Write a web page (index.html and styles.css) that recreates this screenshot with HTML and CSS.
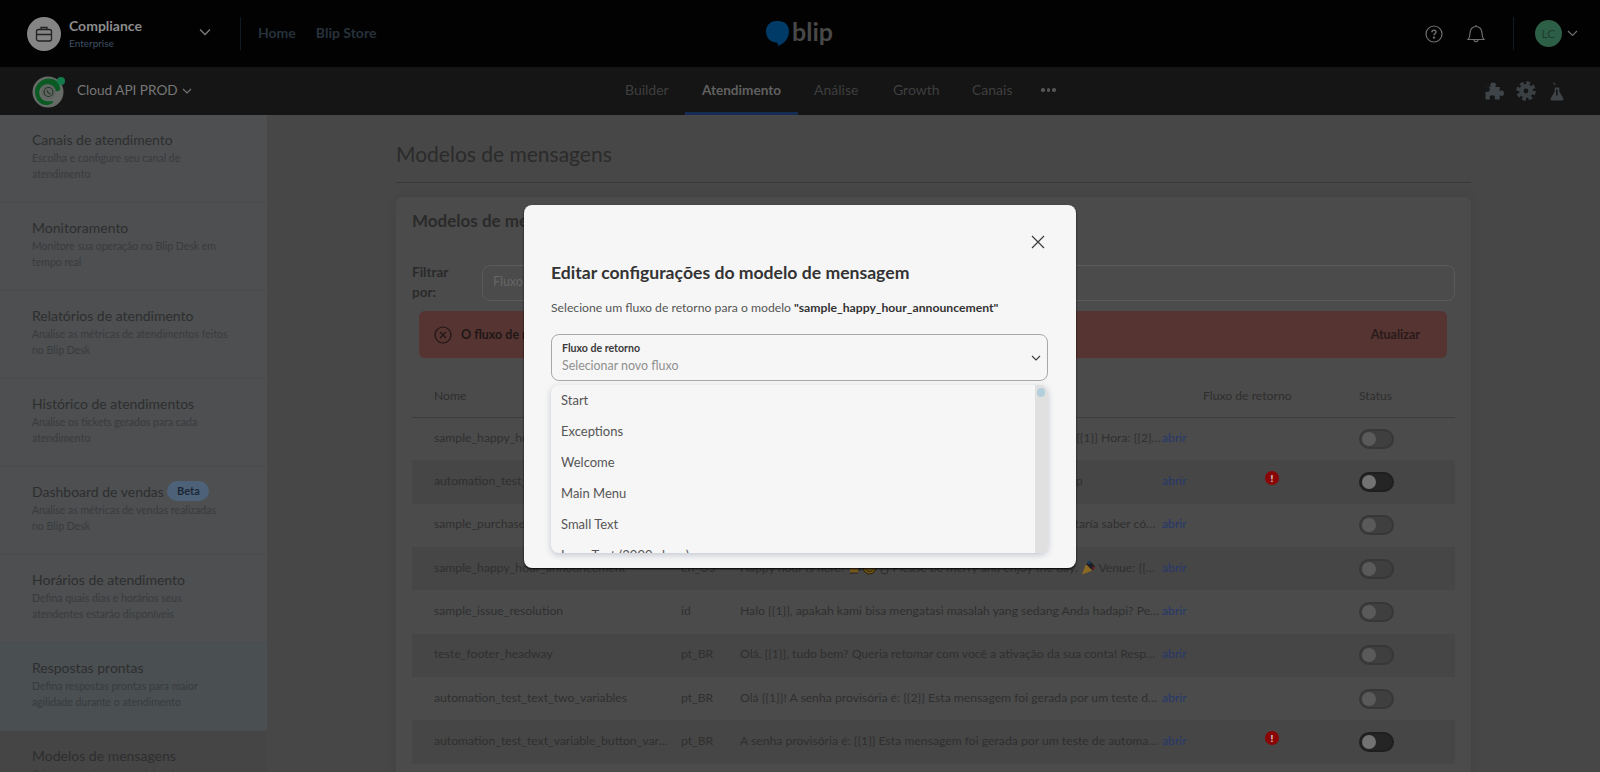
FILE: index.html
```html
<!DOCTYPE html>
<html lang="pt-BR">
<head>
    <meta charset="utf-8">
    <title>Modelos de mensagens</title>
    <link rel="stylesheet" href="styles.css">
</head>
<body>

<div class="page">
    <header class="topbar">
        <div class="tenant">
            <div class="tenant-avatar">
                <svg width="20" height="20" viewBox="0 0 20 20" fill="none" stroke="#222" stroke-width="1.3"><rect x="2.5" y="5.5" width="15" height="11.5" rx="2"/><path d="M7 5.5V3.5h6v2M2.5 10.5h15"/></svg>
            </div>
            <div class="tenant-info">
                <div class="tenant-name">Compliance</div>
                <div class="tenant-plan">Enterprise</div>
            </div>
            <svg class="tenant-arrow" width="12" height="8" viewBox="0 0 12 8" fill="none" stroke="#7d7d7d" stroke-width="1.3"><path d="M1 1.5l5 5 5-5"/></svg>
        </div>
        <div class="topbar-sep"></div>
        <nav class="topbar-links">
            <a>Home</a>
            <a>Blip Store</a>
        </nav>
        <div class="logo">
            <svg width="23" height="25" viewBox="0 0 23 25"><path d="M10 0h2.500C18.500 0 23 4 23 10.500c0 7-4.500 11.500-10.500 14.500l-1.500-3.500C4.500 21.500 0 17 0 10.500 0 4.500 4.500 0 10 0z" fill="#003a66"/></svg>
            <span>blip</span>
        </div>
        <div class="topbar-right">
            <svg width="18" height="18" viewBox="0 0 18 18" fill="none" stroke="#6e6e6e" stroke-width="1.200"><circle cx="9" cy="9" r="8"/><path d="M6.900 7.200c0-1.300 1-2 2.100-2s2.100.7 2.100 1.900c0 1.500-2.100 1.600-2.100 3.200" stroke-width="1.400"/><circle cx="9" cy="12.600" r=".6" fill="#6e6e6e"/></svg>
            <svg class="bell" width="18" height="19" viewBox="0 0 18 19" fill="none" stroke="#6e6e6e" stroke-width="1.200"><path d="M1 15.500h16c-1.500-1.500-2-3-2-6.500 0-3.500-2.500-6.500-6-6.500S3 5.500 3 9c0 3.500-.5 5-2 6.500zM7 15.800c0 2.500 4 2.500 4 0M9 2.500V1"/></svg>
            <div class="topbar-sep right-sep"></div>
            <div class="user-avatar">LC</div>
            <svg width="11" height="7" viewBox="0 0 11 7" fill="none" stroke="#6e6e6e" stroke-width="1.200"><path d="M1 1l4.500 4.500L10 1"/></svg>
        </div>
    </header>

    <div class="subbar">
        <div class="bot">
            <svg width="34" height="34" viewBox="0 0 34 34">
                <circle cx="16" cy="18" r="15.500" fill="#666b67"/>
                <path d="M13 5c6-2 14 1 15 8 1 4-2 5-5 4-1-5-6-8-11-6-4 2-6 7-4 11 2 5 8 6 13 5 1 2-3 4-7 4C8 31 3 25 3 18 3 12 7 7 13 5z" fill="#0b5a24"/>
                <circle cx="16.500" cy="18" r="7.500" fill="#5f6560"/>
                <circle cx="16.500" cy="18" r="4.500" fill="none" stroke="#26362b" stroke-width="1.200"/>
                <path d="M14.800 16.400c.6 2 1.500 2.900 3.400 3.500" fill="none" stroke="#26362b" stroke-width="1.300"/>
                <circle cx="29" cy="7" r="4" fill="#137a4c"/>
            </svg>
            <span class="bot-name">Cloud API PROD</span>
            <svg class="bot-arrow" width="10" height="6" viewBox="0 0 10 6" fill="none" stroke="#777" stroke-width="1.100"><path d="M1 1l4 4 4-4"/></svg>
        </div>
        <nav class="tabs">
            <a style="width:59px">Builder</a>
            <a class="active" style="width:113px">Atendimento</a>
            <a style="width:79px">Análise</a>
            <a style="width:79px">Growth</a>
            <a style="width:69px">Canais</a>
            <span class="tab-more"><i></i><i></i><i></i></span>
        </nav>
        <div class="subbar-icons">
            <svg class="icon-puzzle" width="20" height="20" viewBox="0 0 20 20" fill="#3e4447"><path d="M8.200 1.500c1.700 0 2.800 1 2.800 2.200 0 .8-.6 1.100-.6 1.700 0 .3.200.5.600.5h3.700v3.700c0 .4.200.6.500.6.500 0 .9-.6 1.700-.6 1.200 0 2.100 1.100 2.100 2.700s-.9 2.700-2.100 2.700c-.8 0-1.200-.6-1.700-.6-.3 0-.5.200-.5.600v3.600H10c-.4 0-.6-.2-.6-.5 0-.5.600-.9.600-1.700 0-1.200-1.100-2.100-2.700-2.100s-2.700.9-2.700 2.100c0 .8.600 1.200.6 1.700 0 .3-.2.500-.6.500H.5V11c0-.4.200-.6.500-.6.500 0 .9.600 1.700.6 1.200 0 2.100-1.100 2.100-2.700S3.900 5.600 2.700 5.600c-.8 0-1.200.6-1.700.6-.3 0-.5-.2-.5-.6h4.800c.4 0 .6-.2.600-.5 0-.6-.6-.9-.6-1.700 0-1.100 1.200-1.900 2.900-1.900z"/></svg>
            <svg class="icon-gear" width="20" height="20" viewBox="0 0 20 20"><circle cx="10" cy="10" r="7" fill="#3a4043"/><circle cx="10" cy="10" r="8" fill="none" stroke="#3a4043" stroke-width="3.500" stroke-dasharray="3.700 2.580"/><circle cx="10" cy="10" r="2.400" fill="#151515"/></svg>
            <svg width="14" height="19" viewBox="0 0 14 19" fill="#3e4447"><path d="M4.700 5.500h4.600v4l4 7c.5 1-.1 2-1.200 2H1.900C.8 18.500.2 17.500.7 16.500l4-7z"/><path d="M3.500.5L5 3" stroke="#3e4447" stroke-width="1.300" fill="none"/><rect x="6" y="7.500" width="1.600" height="6" fill="#151515"/></svg>
        </div>
    </div>

    <div class="body">
        <aside class="sidebar">
            <a class="side-item">
                <div class="side-title">Canais de atendimento</div>
                <div class="side-desc">Escolha e configure seu canal de<br>atendimento</div>
            </a>
            <a class="side-item">
                <div class="side-title">Monitoramento</div>
                <div class="side-desc">Monitore sua operação no Blip Desk em<br>tempo real</div>
            </a>
            <a class="side-item">
                <div class="side-title">Relatórios de atendimento</div>
                <div class="side-desc">Analise as métricas de atendimentos feitos<br>no Blip Desk</div>
            </a>
            <a class="side-item">
                <div class="side-title">Histórico de atendimentos</div>
                <div class="side-desc">Analise os tickets gerados para cada<br>atendimento</div>
            </a>
            <a class="side-item">
                <div class="side-title">Dashboard de vendas <span class="beta">Beta</span></div>
                <div class="side-desc">Analise as métricas de vendas realizadas<br>no Blip Desk</div>
            </a>
            <a class="side-item">
                <div class="side-title">Horários de atendimento</div>
                <div class="side-desc">Defina quais dias e horários seus<br>atendentes estarão disponíveis</div>
            </a>
            <a class="side-item">
                <div class="side-title">Respostas prontas</div>
                <div class="side-desc">Defina respostas prontas para maior<br>agilidade durante o atendimento</div>
            </a>
            <a class="side-item current">
                <div class="side-title">Modelos de mensagens</div>
                <div class="side-desc">Crie e gerencie seus modelos de<br>mensagens</div>
            </a>
        </aside>

        <main class="content">
            <h1 class="content-title">Modelos de mensagens</h1>
            <section class="card">
                <h2 class="card-title">Modelos de mensagens</h2>
                <div class="filter">
                    <label class="filter-label">Filtrar<br>por:</label>
                    <div class="filter-input">Fluxo de retorno</div>
                </div>
                <div class="alert">
                    <svg width="18" height="18" viewBox="0 0 18 18" fill="none" stroke="#1f1515" stroke-width="1.200"><circle cx="9" cy="9" r="8"/><path d="M6 6l6 6M12 6l-6 6"/></svg>
                    <span class="alert-text">O fluxo de retorno de alguns modelos precisa ser atualizado</span>
                    <span class="alert-action">Atualizar</span>
                </div>
                <div class="tpl-table">
                    <div class="tpl-row tpl-head">
                        <div>Nome</div><div>Idioma</div><div>Mensagem</div><div></div><div>Fluxo de retorno</div><div>Status</div>
                    </div>
                    <div class="tpl-row">
                        <div class="cell-name">sample_happy_hour_announcement</div><div>pt_BR</div>
                        <div class="cell-text">A happy hour chegou! Venha curtir conosco no bar novo. Data: {{1}} Hora: {{2}} Local: {{3}} Aproveite!</div>
                        <a class="open">abrir</a><div></div><div><span class="toggle"></span></div>
                    </div>
                    <div class="tpl-row">
                        <div class="cell-name">automation_test_text_no_variable</div><div>pt_BR</div>
                        <div class="cell-text">Esta mensagem foi feita por um teste de automação no meu app</div>
                        <a class="open">abrir</a><div><span class="flow-alert">!</span></div><div><span class="toggle on"></span></div>
                    </div>
                    <div class="tpl-row">
                        <div class="cell-name">sample_purchase_feedback</div><div>es</div>
                        <div class="cell-text">Gracias por comprar {{1}}. Valoramos tus comentarios y nos gustaría saber cómo fue tu experiencia.</div>
                        <a class="open">abrir</a><div></div><div><span class="toggle"></span></div>
                    </div>
                    <div class="tpl-row">
                        <div class="cell-name">sample_happy_hour_announcement</div><div>en_US</div>
                        <div class="cell-text">Happy hour is here!
                            <svg class="emoji" width="15" height="15" viewBox="0 0 15 15"><path d="M3 2h8v11H3z" fill="#7a5a1e"/><path d="M11 5h3v5h-3" fill="none" stroke="#2a2a2a"/><path d="M3 13h8" stroke="#222"/></svg><svg class="emoji" width="15" height="15" viewBox="0 0 15 15"><circle cx="7.500" cy="7.500" r="6.500" fill="#6e5318" stroke="#2a2208"/><path d="M4 9.500c1.500 2.500 5.500 2.500 7 0" fill="none" stroke="#2a2208"/></svg>
                            <svg class="emoji" width="9" height="15" viewBox="0 0 9 15"><circle cx="4.500" cy="10.500" r="3.500" fill="none" stroke="#2a2a2a"/><path d="M4.500 2v5" stroke="#2a2a2a"/></svg>
                            Please be merry and enjoy the day.
                            <svg class="emoji" width="15" height="15" viewBox="0 0 15 15"><path d="M1 14.500L5 4l6.500 6.500z" fill="#8a6a22"/><path d="M5 4l6.500 6.500 2.500-4-4.500-5z" fill="#1d1d22"/><circle cx="8" cy="2.500" r="1.800" fill="#1f3d5c"/><circle cx="12.500" cy="8" r="1.500" fill="#6a2424"/></svg>
                            Venue: {{1}} Time: {{2}} and more</div>
                        <a class="open">abrir</a><div></div><div><span class="toggle"></span></div>
                    </div>
                    <div class="tpl-row">
                        <div class="cell-name">sample_issue_resolution</div><div>id</div>
                        <div class="cell-text">Halo {{1}}, apakah kami bisa mengatasi masalah yang sedang Anda hadapi? Pesan ini</div>
                        <a class="open">abrir</a><div></div><div><span class="toggle"></span></div>
                    </div>
                    <div class="tpl-row">
                        <div class="cell-name">teste_footer_headway</div><div>pt_BR</div>
                        <div class="cell-text">Olá, {{1}}, tudo bem? Queria retomar com você a ativação da sua conta! Responda esta mensagem</div>
                        <a class="open">abrir</a><div></div><div><span class="toggle"></span></div>
                    </div>
                    <div class="tpl-row">
                        <div class="cell-name">automation_test_text_two_variables</div><div>pt_BR</div>
                        <div class="cell-text">Olá {{1}}! A senha provisória é: {{2}} Esta mensagem foi gerada por um teste de automação</div>
                        <a class="open">abrir</a><div></div><div><span class="toggle"></span></div>
                    </div>
                    <div class="tpl-row">
                        <div class="cell-name">automation_test_text_variable_button_variable</div><div>pt_BR</div>
                        <div class="cell-text">A senha provisória é: {{1}} Esta mensagem foi gerada por um teste de automação</div>
                        <a class="open">abrir</a><div><span class="flow-alert">!</span></div><div><span class="toggle on"></span></div>
                    </div>
                </div>
            </section>
        </main>
    </div>

    <div class="modal">
        <div class="modal-close">
            <svg width="14" height="14" viewBox="0 0 14 14" fill="none" stroke="#3a3a3a" stroke-width="1.200"><path d="M1 1l12 12M13 1L1 13"/></svg>
        </div>
        <h3 class="modal-title">Editar configurações do modelo de mensagem</h3>
        <p class="modal-text">Selecione um fluxo de retorno para o modelo <b>"sample_happy_hour_announcement"</b></p>
        <div class="select">
            <div>
                <div class="select-label">Fluxo de retorno</div>
                <div class="select-value">Selecionar novo fluxo</div>
            </div>
            <svg width="10" height="6" viewBox="0 0 10 6" fill="none" stroke="#3a3a3a" stroke-width="1.100"><path d="M1 1l4 4 4-4"/></svg>
        </div>
        <div class="dropdown">
            <ul class="options">
                <li>Start</li>
                <li>Exceptions</li>
                <li>Welcome</li>
                <li>Main Menu</li>
                <li>Small Text</li>
                <li>Long Text (3000 chars)</li>
            </ul>
            <div class="scroll-track"><div class="scroll-thumb"></div></div>
        </div>
    </div>
</div>

</body>
</html>
```

FILE: styles.css
```css
* {
    box-sizing: border-box;
}
body {
    margin: 0;
    font-family: "Lato", "Open Sans", sans-serif;
    background: #474747;
}
.page {
    position: relative;
    height: 772px;
    overflow: hidden;
    display: flex;
    flex-direction: column;
}

/* top bar */
.topbar {
    height: 67px;
    flex: none;
    background: #020202;
    display: flex;
    align-items: center;
    position: relative;
}
.tenant {
    width: 240px;
    padding-left: 27px;
    display: flex;
    align-items: center;
}
.tenant-avatar {
    width: 34px;
    height: 34px;
    border-radius: 50%;
    background: #858585;
    display: flex;
    align-items: center;
    justify-content: center;
    margin-right: 8px;
}
.tenant-info {
    width: 130px;
    margin-top: -2px;
}
.tenant-name {
    font-size: 14px;
    font-weight: 700;
    color: #8c8c8c;
    line-height: 20px;
}
.tenant-plan {
    font-size: 10px;
    color: #3f5164;
    line-height: 14px;
}
.tenant-arrow {
    margin-top: -4px;
}
.topbar-sep {
    width: 1px;
    height: 33px;
    background: #0f1a26;
}
.topbar-links {
    display: flex;
    gap: 20px;
    margin-left: 17px;
    margin-top: -3px;
}
.topbar-links a {
    font-size: 14px;
    font-weight: 700;
    color: #26313c;
}
.logo {
    position: absolute;
    left: 766px;
    top: 21px;
    display: flex;
    align-items: flex-start;
    gap: 3px;
}
.logo span {
    font-size: 25px;
    font-weight: 700;
    line-height: 21px;
    color: #484848;
}
.topbar-right {
    margin-left: auto;
    display: flex;
    align-items: center;
    padding-right: 22px;
}
.bell {
    margin-left: 24px;
}
.right-sep {
    margin-left: 28px;
    margin-right: 21px;
}
.user-avatar {
    width: 27px;
    height: 27px;
    border-radius: 50%;
    background: #2d5f46;
    color: #1d3e2e;
    font-size: 12px;
    display: flex;
    align-items: center;
    justify-content: center;
    margin-right: 5px;
}

/* second bar */
.subbar {
    height: 48px;
    flex: none;
    background: #151515;
    display: flex;
    align-items: center;
    position: relative;
}
.bot {
    display: flex;
    align-items: center;
    padding-left: 32px;
    width: 625px;
}
.bot-name {
    font-size: 13.6px;
    color: #777;
    margin: -3px 4px 0 11px;
}
.bot-arrow {
    margin-top: -1px;
}
.tabs {
    display: flex;
    height: 48px;
    align-items: center;
}
.tabs a {
    font-size: 14px;
    color: #3f3f3f;
    height: 48px;
    line-height: 46px;
    white-space: nowrap;
}
.tabs a.active {
    color: #606060;
    font-size: 13.6px;
    font-weight: 700;
    text-align: center;
    border-bottom: 3px solid #152c52;
    margin: 0 16px 0 1px;
}
.tab-more {
    display: flex;
    gap: 2px;
    margin-top: -2px;
}
.tab-more i {
    width: 3.500px;
    height: 3.500px;
    border-radius: 50%;
    background: #555;
}
.subbar-icons {
    margin-left: auto;
    padding-right: 36px;
    display: flex;
    align-items: center;
}
.icon-puzzle {
    margin-right: 11px;
}
.icon-gear {
    margin-right: 14px;
}

/* sidebar */
.body {
    flex: 1;
    display: flex;
    min-height: 0;
}
.sidebar {
    width: 267px;
    flex: none;
    background: #4d4f51;
}
.side-item {
    display: block;
    height: 88px;
    padding: 14px 32px 0;
    border-bottom: 1px solid #494b4c;
}
.side-item:nth-child(7) {
    background: #4a4f52;
}
.side-item.current {
    background: #454545;
    border: 0;
}
.side-title {
    font-size: 14px;
    line-height: 21px;
    color: #2e2e2e;
    white-space: nowrap;
}
.side-desc {
    font-size: 10.5px;
    line-height: 16px;
    color: #393b3c;
    white-space: nowrap;
}
.beta {
    display: inline-block;
    font-size: 11px;
    font-weight: 700;
    line-height: 20px;
    height: 20px;
    width: 42px;
    text-align: center;
    border-radius: 10px;
    background: #4d6278;
    color: #1c2835;
    vertical-align: top;
}

/* content */
.content {
    flex: 1;
    min-width: 0;
    padding: 0 129px;
}
.content-title {
    margin: 0;
    height: 68px;
    padding-top: 25px;
    font-size: 21px;
    line-height: 28px;
    font-weight: 400;
    color: #2b2b2b;
    border-bottom: 1px solid #393939;
}
.card {
    margin-top: 14px;
    background: #4b4b4b;
    border-radius: 6px 6px 0 0;
    box-shadow: 0 0 12px rgba(0,0,0,0.08);
    padding: 0 16px;
    height: 600px;
}
.card-title {
    margin: 0;
    height: 68px;
    padding-top: 12px;
    font-size: 17px;
    line-height: 24px;
    font-weight: 700;
    color: #2a2a2a;
}
.filter {
    display: flex;
    align-items: center;
    height: 36px;
}
.filter-label {
    width: 70px;
    font-size: 13.5px;
    line-height: 20px;
    font-weight: 700;
    color: #2a2a2a;
    margin-top: -2px;
}
.filter-input {
    flex: 1;
    height: 36px;
    border: 1px solid #5a5a5a;
    border-radius: 8px;
    padding: 0 10px;
    font-size: 12.5px;
    line-height: 32px;
    color: #666;
}
.alert {
    margin: 10px 8px 0 7px;
    height: 47px;
    border-radius: 6px;
    background: #553432;
    display: flex;
    align-items: center;
    padding: 0 27px 0 15px;
    font-size: 12.5px;
    font-weight: 700;
    color: #1f1717;
}
.alert-text {
    margin-left: 9px;
}
.alert-action {
    margin-left: auto;
    color: #2a1a1a;
}

/* table */
.tpl-table {
    margin-top: 15px;
}
.tpl-row {
    display: grid;
    grid-template-columns: 269px 59px 422px 41px 156px 95px;
    height: 43.33px;
    align-items: center;
    font-size: 12.2px;
    color: #2f2f2f;
    white-space: nowrap;
}
.tpl-row > *:first-child {
    padding-left: 22px;
}
.tpl-row > *:nth-child(-n+4) {
    margin-top: -3px;
}
.tpl-row:nth-child(odd) {
    background: #464646;
}
.tpl-head,
.tpl-row.tpl-head:nth-child(odd) {
    height: 45px;
    background: none;
    border-bottom: 1px solid #3d3d3d;
    color: #2e2e2e;
}
.tpl-head + .tpl-row {
    height: 42.33px;
}
.tpl-head > *,
.tpl-row.tpl-head > *:nth-child(-n+4) {
    margin-top: 0;
}
.cell-name {
    overflow: hidden;
    text-overflow: ellipsis;
    padding-right: 12px;
}
.cell-text {
    overflow: hidden;
    text-overflow: ellipsis;
}
.emoji {
    vertical-align: -3px;
}
.open {
    color: #26386b;
}
.flow-alert {
    display: block;
    width: 14px;
    height: 14px;
    border-radius: 50%;
    background: #8a0505;
    color: #d9c9c9;
    font-size: 10px;
    font-weight: 900;
    line-height: 14px;
    text-align: center;
    margin: -7px 0 0 62px;
}
.toggle {
    display: block;
    position: relative;
    width: 35px;
    height: 20px;
    border-radius: 10px;
    background: #3f3f3f;
    border: 2px solid #373737;
}
.toggle::after {
    content: "";
    position: absolute;
    left: 1px;
    top: 1px;
    width: 14px;
    height: 14px;
    border-radius: 50%;
    background: #5a5a5a;
}
.toggle.on {
    background: #252525;
    border-color: #1f1f1f;
}
.toggle.on::after {
    background: #727272;
}

/* modal */
.modal {
    position: absolute;
    left: 524px;
    top: 205px;
    width: 552px;
    height: 363px;
    background: #f6f6f6;
    border-radius: 8px;
    padding: 0 28px 0 27px;
    box-shadow: 0 1px 2px #000;
}
.modal-close {
    display: flex;
    justify-content: flex-end;
    padding: 30px 3px 0 0;
    height: 44px;
}
.modal-title {
    margin: 11px 0 0;
    font-size: 17.6px;
    line-height: 26px;
    font-weight: 700;
    color: #333;
}
.modal-text {
    margin: 12px 0 0;
    font-size: 12.2px;
    line-height: 20px;
    color: #555;
}
.modal-text b {
    color: #333;
}
.select {
    margin-top: 16px;
    height: 47px;
    border: 1px solid #a8a8a8;
    border-radius: 8px;
    padding: 5px 6px 5px 10px;
    display: flex;
    align-items: center;
    justify-content: space-between;
}
.select-label {
    font-size: 10.6px;
    line-height: 16px;
    font-weight: 700;
    color: #3a3a3a;
}
.select-value {
    font-size: 12.4px;
    line-height: 19px;
    color: #8f8f8f;
}
.dropdown {
    margin-top: 4px;
    height: 168px;
    border-radius: 8px;
    overflow: hidden;
    display: flex;
    box-shadow: 0 2px 6px rgba(80,90,130,0.3);
}
.options {
    list-style: none;
    margin: 0;
    padding: 0;
    flex: 1;
}
.options li {
    height: 31.1px;
    line-height: 31px;
    padding-left: 10px;
    font-size: 13px;
    color: #555;
}
.scroll-track {
    width: 13px;
    background: #e0e0e0;
    padding: 3px 2px;
}
.scroll-thumb {
    width: 8px;
    height: 9px;
    border-radius: 4px;
    background: #b4cfdc;
}
```
